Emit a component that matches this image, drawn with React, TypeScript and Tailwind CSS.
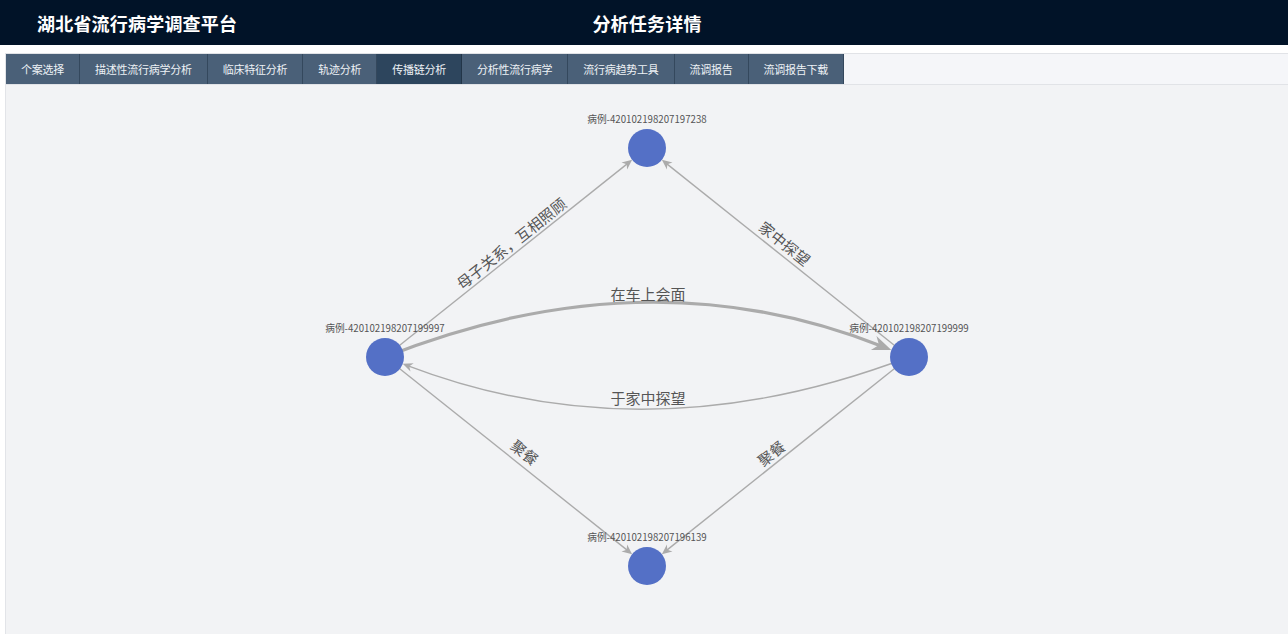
import React from "react";

type P = { x: number; y: number };

const R = 19;
const nodes: Record<string, P & { label: string }> = {
  top: { x: 647, y: 148, label: "病例-420102198207197238" },
  left: { x: 385, y: 357, label: "病例-420102198207199997" },
  right: { x: 909, y: 357, label: "病例-420102198207199999" },
  bottom: { x: 647, y: 566, label: "病例-420102198207196139" },
};

function norm(dx: number, dy: number) {
  const l = Math.hypot(dx, dy);
  return { x: dx / l, y: dy / l };
}

function arrowPath(tip: P, d: P, L: number, W: number) {
  const n = { x: -d.y, y: d.x };
  const b = { x: tip.x - d.x * L, y: tip.y - d.y * L };
  const notch = { x: tip.x - d.x * L * 0.7, y: tip.y - d.y * L * 0.7 };
  return `M${tip.x},${tip.y} L${b.x + (n.x * W) / 2},${b.y + (n.y * W) / 2} L${notch.x},${notch.y} L${b.x - (n.x * W) / 2},${b.y - (n.y * W) / 2} Z`;
}

const EDGE = "#ababab";

function Straight({ from, to }: { from: P; to: P }) {
  const d = norm(to.x - from.x, to.y - from.y);
  const tip = { x: to.x - d.x * R, y: to.y - d.y * R };
  return (
    <g>
      <line x1={from.x} y1={from.y} x2={tip.x - d.x * 4} y2={tip.y - d.y * 4} stroke={EDGE} strokeWidth={1.4} />
      <path d={arrowPath(tip, d, 10, 9)} fill={EDGE} />
    </g>
  );
}

function Curve({ from, to, c, width, L, W }: { from: P; to: P; c: P; width: number; L: number; W: number }) {
  const d = norm(to.x - c.x, to.y - c.y);
  const tip = { x: to.x - d.x * R, y: to.y - d.y * R };
  return (
    <g>
      <path
        d={`M${from.x},${from.y} Q${c.x},${c.y} ${tip.x - d.x * L * 0.5},${tip.y - d.y * L * 0.5}`}
        fill="none"
        stroke={EDGE}
        strokeWidth={width}
      />
      <path d={arrowPath(tip, d, L, W)} fill={EDGE} />
    </g>
  );
}

function EdgeLabel({ x, y, rot, text }: { x: number; y: number; rot: number; text: string }) {
  return (
    <text
      x={x}
      y={y}
      textAnchor="middle"
      dominantBaseline="central"
      fontSize={15}
      fill="#555555"
      transform={`rotate(${rot} ${x} ${y})`}
      style={{ fontFamily: '"Noto Sans CJK SC", "Noto Sans", sans-serif' }}
    >
      {text}
    </text>
  );
}

const tabs = [
  "个案选择",
  "描述性流行病学分析",
  "临床特征分析",
  "轨迹分析",
  "传播链分析",
  "分析性流行病学",
  "流行病趋势工具",
  "流调报告",
  "流调报告下载",
];

export default function App() {
  const ang = 38.6;
  return (
    <div
      className="w-[1288px] h-[634px] bg-white flex flex-col overflow-hidden"
      style={{ fontFamily: '"Noto Sans CJK SC", "Noto Sans", sans-serif' }}
    >
      <header className="h-[45px] shrink-0 bg-[#011328] grid grid-cols-3 items-center text-white font-bold text-[18px] pt-[2px]">
        <div className="pl-[37px] tracking-[0.2px]">湖北省流行病学调查平台</div>
        <div className="text-center pl-[6px] tracking-[0.2px]">分析任务详情</div>
        <div />
      </header>
      <div className="flex-1 mt-[8px] ml-[5px] border-l border-[#e2e4e8] flex flex-col min-h-0">
        <nav className="h-[32px] shrink-0 bg-[#f5f6f9] border-t border-b border-[#e1e3e7] flex">
          {tabs.map((t, i) => (
            <div
              key={t}
              className={
                i === 4
                  ? "h-full px-[15px] flex items-center text-[11px] tracking-[-0.25px] text-[#eef2f6] bg-[#2d455d] border-r border-[#223548]"
                  : "h-full px-[15px] flex items-center text-[11px] tracking-[-0.25px] text-[#eef2f6] bg-[#4a6078] border-r border-[#34485d]"
              }
            >
              {t}
            </div>
          ))}
        </nav>
        <div className="flex-1 bg-[#f2f3f5] min-h-0">
          <svg viewBox="6 85 1282 549" width="1282" height="549" className="block">
            <Straight from={nodes.left} to={nodes.top} />
            <Straight from={nodes.right} to={nodes.top} />
            <Straight from={nodes.left} to={nodes.bottom} />
            <Straight from={nodes.right} to={nodes.bottom} />
            <Curve from={nodes.left} to={nodes.right} c={{ x: 647, y: 253 }} width={3.2} L={19} W={15} />
            <Curve from={nodes.right} to={nodes.left} c={{ x: 647, y: 457 }} width={1.4} L={10} W={9} />

            <EdgeLabel x={511} y={243} rot={-ang} text="母子关系，互相照顾" />
            <EdgeLabel x={785} y={243} rot={ang} text="家中探望" />
            <EdgeLabel x={648} y={293} rot={0} text="在车上会面" />
            <EdgeLabel x={648} y={397} rot={0} text="于家中探望" />
            <EdgeLabel x={525} y={452} rot={ang} text="聚餐" />
            <EdgeLabel x={771} y={453} rot={-ang} text="聚餐" />

            {Object.values(nodes).map((n) => (
              <g key={n.label}>
                <circle cx={n.x} cy={n.y} r={R} fill="#5470c6" />
                <text
                  x={n.x}
                  y={n.y - 29}
                  textAnchor="middle"
                  dominantBaseline="central"
                  fontSize={9.7}
                  fill="#555555"
                  style={{ fontFamily: '"Noto Sans CJK SC", "Noto Sans", sans-serif' }}
                >
                  {n.label}
                </text>
              </g>
            ))}
          </svg>
        </div>
      </div>
    </div>
  );
}
